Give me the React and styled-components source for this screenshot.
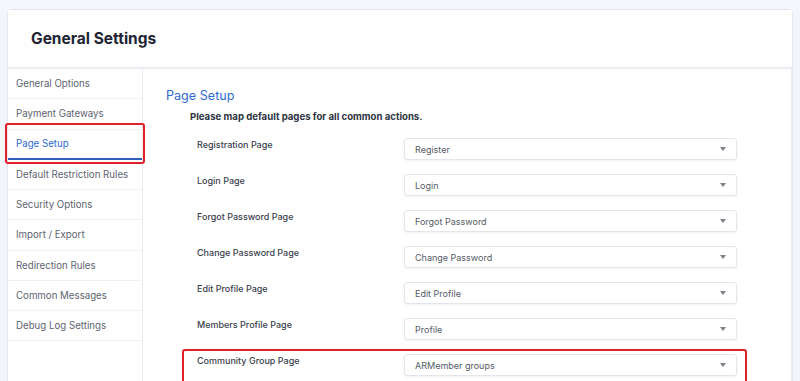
import React from "react";
import styled, { createGlobalStyle } from "styled-components";

const Global = createGlobalStyle`
  html, body { margin: 0; padding: 0; background: #f3f6fa; }
  body { font-family: Inter, "Noto Sans", sans-serif; overflow: hidden; }
  * { box-sizing: border-box; }
`;

const Page = styled.div`
  width: 800px;
  height: 381px;
  padding: 9px 7px 0 7px;
  overflow: hidden;
`;

const Card = styled.div`
  background: #fff;
  border: 1px solid #e4e8ee;
  border-radius: 5px 5px 0 0;
  height: 420px;
  display: flex;
  flex-direction: column;
`;

const Header = styled.div`
  height: 59px;
  border-bottom: 2px solid #e9edf2;
  display: flex;
  align-items: center;
  padding: 0 0 0 23px;
  background: #fefefe;
`;

const Title = styled.h1`
  margin: 0;
  font-size: 15.5px;
  font-weight: 700;
  color: #1e2433;
`;

const Body = styled.div`
  display: flex;
  flex: 1;
`;

const Sidebar = styled.nav`
  width: 135px;
  border-right: 1px solid #e9edf2;
  display: flex;
  flex-direction: column;
`;

const NavItem = styled.div`
  position: relative;
  height: 30.25px;
  display: flex;
  align-items: center;
  padding-left: 8px;
  font-size: 9.7px;
  color: ${(p) => (p.$active ? "#2c6bd0" : "#5d6370")};
  border-bottom: ${(p) => (p.$active ? "2px solid #2f5fb8" : "1px solid #eef1f5")};
`;

const Highlight = styled.div`
  position: absolute;
  border: 2px solid #e0202a;
  border-radius: 3px;
  pointer-events: none;
`;

const Content = styled.main`
  flex: 1;
  padding: 19px 0 0 23px;
  border-right: 1px solid #e9edf2;
`;

const SectionTitle = styled.h2`
  margin: 0;
  font-size: 12.6px;
  font-weight: 400;
  color: #2e6ccf;
  height: 16px;
  line-height: 16px;
`;

const Intro = styled.p`
  margin: 6px 0 0 24px;
  font-size: 9.6px;
  font-weight: 700;
  color: #2d3340;
  line-height: 14px;
`;

const Rows = styled.div`
  display: flex;
  flex-direction: column;
  align-items: flex-start;
  gap: 14px;
  margin-top: 14px;
  padding-left: 31px;
`;

const Row = styled.div`
  position: relative;
  display: flex;
  align-items: flex-start;
  height: 22px;
`;

const Label = styled.div`
  width: 207px;
  font-size: 9px;
  font-weight: 500;
  color: #3b414d;
  line-height: 12px;
  margin-top: 1px;
`;

const Select = styled.div`
  width: 333px;
  height: 22px;
  border: 1px solid #e2e6eb;
  border-radius: 3px;
  box-shadow: 0 1px 2px rgba(30, 40, 60, 0.06);
  display: flex;
  align-items: center;
  justify-content: space-between;
  padding: 0 10px 0 10px;
  font-size: 9px;
  color: #555b66;
  background: #fff;
`;

const Caret = styled.span`
  width: 0;
  height: 0;
  border-left: 3.5px solid transparent;
  border-right: 3.5px solid transparent;
  border-top: 4px solid #7a808a;
`;

const nav = [
  "General Options",
  "Payment Gateways",
  "Page Setup",
  "Default Restriction Rules",
  "Security Options",
  "Import / Export",
  "Redirection Rules",
  "Common Messages",
  "Debug Log Settings",
];

const rows = [
  ["Registration Page", "Register"],
  ["Login Page", "Login"],
  ["Forgot Password Page", "Forgot Password"],
  ["Change Password Page", "Change Password"],
  ["Edit Profile Page", "Edit Profile"],
  ["Members Profile Page", "Profile"],
  ["Community Group Page", "ARMember groups", true],
];

export default function App() {
  return (
    <Page>
      <Global />
      <Card>
        <Header>
          <Title>General Settings</Title>
        </Header>
        <Body>
          <Sidebar>
            {nav.map((n) => (
              <NavItem key={n} $active={n === "Page Setup"}>
                {n}
                {n === "Page Setup" && (
                  <Highlight style={{ left: -3, right: -3, top: -7, bottom: -6 }} />
                )}
              </NavItem>
            ))}
          </Sidebar>
          <Content>
            <SectionTitle>Page Setup</SectionTitle>
            <Intro>Please map default pages for all common actions.</Intro>
            <Rows>
              {rows.map(([label, value, hl]) => (
                <Row key={label}>
                  <Label>{label}</Label>
                  <Select>
                    {value}
                    <Caret />
                  </Select>
                  {hl && <Highlight style={{ left: -15, right: -10, top: -5, bottom: -12 }} />}
                </Row>
              ))}
            </Rows>
          </Content>
        </Body>
      </Card>
    </Page>
  );
}
